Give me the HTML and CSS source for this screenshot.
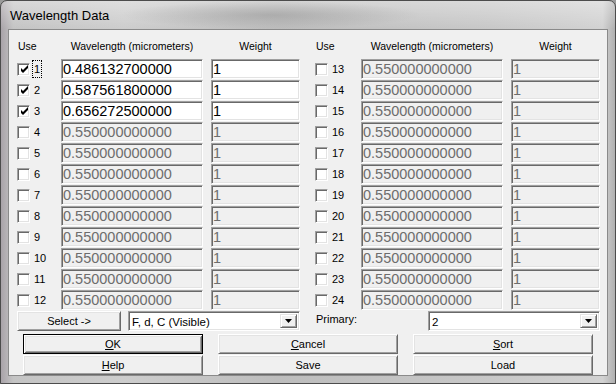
FILE: index.html
```html
<!DOCTYPE html>
<html lang="en">
<head>
  <meta charset="UTF-8">
  <title>Wavelength Data</title>
  <link rel="stylesheet" href="styles.css">
</head>
<body>
  <div class="window">
    <div class="titlebar"><span class="title">Wavelength Data</span></div>

    <div class="client">
      <div class="tables">
        <div class="group">
          <div class="head use">Use</div>
          <div class="head wl">Wavelength (micrometers)</div>
          <div class="head wt">Weight</div>

          <span class="cb on"><svg width="9" height="9" viewBox="0 0 9 9"><polygon points="1,3 3,5 8,0 8,3 3,8 1,6"/></svg></span>
          <span class="num"><span class="focus">1</span></span>
          <input class="field" type="text" value="0.486132700000">
          <input class="field weight" type="text" value="1">

          <span class="cb on"><svg width="9" height="9" viewBox="0 0 9 9"><polygon points="1,3 3,5 8,0 8,3 3,8 1,6"/></svg></span>
          <span class="num">2</span>
          <input class="field" type="text" value="0.587561800000">
          <input class="field weight" type="text" value="1">

          <span class="cb on"><svg width="9" height="9" viewBox="0 0 9 9"><polygon points="1,3 3,5 8,0 8,3 3,8 1,6"/></svg></span>
          <span class="num">3</span>
          <input class="field" type="text" value="0.656272500000">
          <input class="field weight" type="text" value="1">

          <span class="cb"></span><span class="num">4</span>
          <input class="field" type="text" value="0.550000000000" disabled>
          <input class="field weight" type="text" value="1" disabled>

          <span class="cb"></span><span class="num">5</span>
          <input class="field" type="text" value="0.550000000000" disabled>
          <input class="field weight" type="text" value="1" disabled>

          <span class="cb"></span><span class="num">6</span>
          <input class="field" type="text" value="0.550000000000" disabled>
          <input class="field weight" type="text" value="1" disabled>

          <span class="cb"></span><span class="num">7</span>
          <input class="field" type="text" value="0.550000000000" disabled>
          <input class="field weight" type="text" value="1" disabled>

          <span class="cb"></span><span class="num">8</span>
          <input class="field" type="text" value="0.550000000000" disabled>
          <input class="field weight" type="text" value="1" disabled>

          <span class="cb"></span><span class="num">9</span>
          <input class="field" type="text" value="0.550000000000" disabled>
          <input class="field weight" type="text" value="1" disabled>

          <span class="cb"></span><span class="num">10</span>
          <input class="field" type="text" value="0.550000000000" disabled>
          <input class="field weight" type="text" value="1" disabled>

          <span class="cb"></span><span class="num">11</span>
          <input class="field" type="text" value="0.550000000000" disabled>
          <input class="field weight" type="text" value="1" disabled>

          <span class="cb"></span><span class="num">12</span>
          <input class="field" type="text" value="0.550000000000" disabled>
          <input class="field weight" type="text" value="1" disabled>
        </div>

        <div class="group right">
          <div class="head use">Use</div>
          <div class="head wl">Wavelength (micrometers)</div>
          <div class="head wt">Weight</div>

          <span class="cb"></span><span class="num">13</span>
          <input class="field" type="text" value="0.550000000000" disabled>
          <input class="field weight" type="text" value="1" disabled>

          <span class="cb"></span><span class="num">14</span>
          <input class="field" type="text" value="0.550000000000" disabled>
          <input class="field weight" type="text" value="1" disabled>

          <span class="cb"></span><span class="num">15</span>
          <input class="field" type="text" value="0.550000000000" disabled>
          <input class="field weight" type="text" value="1" disabled>

          <span class="cb"></span><span class="num">16</span>
          <input class="field" type="text" value="0.550000000000" disabled>
          <input class="field weight" type="text" value="1" disabled>

          <span class="cb"></span><span class="num">17</span>
          <input class="field" type="text" value="0.550000000000" disabled>
          <input class="field weight" type="text" value="1" disabled>

          <span class="cb"></span><span class="num">18</span>
          <input class="field" type="text" value="0.550000000000" disabled>
          <input class="field weight" type="text" value="1" disabled>

          <span class="cb"></span><span class="num">19</span>
          <input class="field" type="text" value="0.550000000000" disabled>
          <input class="field weight" type="text" value="1" disabled>

          <span class="cb"></span><span class="num">20</span>
          <input class="field" type="text" value="0.550000000000" disabled>
          <input class="field weight" type="text" value="1" disabled>

          <span class="cb"></span><span class="num">21</span>
          <input class="field" type="text" value="0.550000000000" disabled>
          <input class="field weight" type="text" value="1" disabled>

          <span class="cb"></span><span class="num">22</span>
          <input class="field" type="text" value="0.550000000000" disabled>
          <input class="field weight" type="text" value="1" disabled>

          <span class="cb"></span><span class="num">23</span>
          <input class="field" type="text" value="0.550000000000" disabled>
          <input class="field weight" type="text" value="1" disabled>

          <span class="cb"></span><span class="num">24</span>
          <input class="field" type="text" value="0.550000000000" disabled>
          <input class="field weight" type="text" value="1" disabled>
        </div>
      </div>

      <div class="select-row">
        <div class="select-left">
          <button class="btn select-btn">Select -&gt;</button>
          <div class="combo">
            <span class="combo-text">F, d, C (Visible)</span>
            <span class="combo-btn"><svg width="7" height="4" viewBox="0 0 7 4"><polygon points="0,0 7,0 3.5,4"/></svg></span>
          </div>
        </div>
        <div class="select-right">
          <span class="primary-label">Primary:</span>
          <div class="combo">
            <span class="combo-text">2</span>
            <span class="combo-btn"><svg width="7" height="4" viewBox="0 0 7 4"><polygon points="0,0 7,0 3.5,4"/></svg></span>
          </div>
        </div>
      </div>

      <div class="buttons">
        <button class="btn default"><u>O</u>K</button>
        <button class="btn"><u>C</u>ancel</button>
        <button class="btn"><u>S</u>ort</button>
        <button class="btn"><u>H</u>elp</button>
        <button class="btn">Save</button>
        <button class="btn">Load</button>
      </div>
    </div>
  </div>
</body>
</html>
```

FILE: styles.css
```css
body {
  margin: 0;
  font-family: "Liberation Sans", Arial, sans-serif;
  font-size: 11px;
  color: #000;
  background: #9a9a9a;
}
.window {
  box-sizing: border-box;
  width: 616px;
  height: 384px;
  display: flex;
  flex-direction: column;
  padding: 0 7px 7px;
  border: 1px solid #4c4c4c;
  border-radius: 7px 7px 0 0;
  background:
    radial-gradient(ellipse 150px 14px at 270px 14px, rgba(120,120,120,0.35), rgba(120,120,120,0)),
    linear-gradient(to bottom, rgba(255,255,255,0.35), rgba(255,255,255,0) 28px),
    linear-gradient(to right, #a9a3a9, #c4c4c4 2%, #cdcdcd 20%, #bdbdbd 45%, #c8c8c8 80%, #d2d2d2 98%, #b0b0b0);
}
.titlebar {
  height: 28px;
  display: flex;
  align-items: center;
  padding-left: 2px;
}
.title {
  font-size: 13px;
}
.client {
  flex: 1;
  display: flex;
  flex-direction: column;
  padding: 0 7px 0 8px;
  background: #f0f0f0;
  border: 1px solid #8a8a8a;
}
.tables {
  display: flex;
  gap: 15px;
  padding-top: 5px;
}
.group {
  display: grid;
  grid-template-columns: 13px 31px 142px 97px;
  grid-template-rows: 23px;
  grid-auto-rows: 20px;
  row-gap: 1px;
  align-items: center;
}
.group.right {
  grid-template-columns: 13px 33px 142px 97px;
}
.head {
  align-self: start;
  margin-top: 3px;
  font-size: 10.5px;
  line-height: 16px;
  white-space: nowrap;
}
.head.use {
  grid-column: 1 / 3;
  padding-left: 1px;
}
.head.wl {
  text-align: center;
}
.head.wt {
  text-align: center;
  padding-left: 8px;
}
.cb {
  box-sizing: border-box;
  width: 13px;
  height: 13px;
  display: flex;
  align-items: center;
  justify-content: center;
  background: #fff;
  border: 1px solid;
  border-color: #a0a0a0 #fff #fff #a0a0a0;
  box-shadow: inset 1px 1px #696969, inset -1px -1px #e3e3e3;
}
.cb svg {
  margin: 1px 0 0 1px;
}
.num {
  padding-left: 4px;
}
.focus {
  display: inline-block;
  line-height: 16px;
  padding: 0 1px;
  margin-left: -2px;
  border: 1px dotted #000;
}
.field {
  box-sizing: border-box;
  width: 142px;
  height: 20px;
  margin: 0;
  padding: 0 0 0 1px;
  font-family: "Liberation Sans", Arial, sans-serif;
  font-size: 14.5px;
  color: #000;
  background: #fff;
  border: 1px solid;
  border-color: #a0a0a0 #fff #fff #a0a0a0;
  box-shadow: inset 1px 1px #696969, inset -1px -1px #e3e3e3;
  outline: none;
}
.field:disabled {
  color: #6d6d6d;
  background: #f0f0f0;
}
.field.weight {
  width: 89px;
  justify-self: end;
}
.select-row {
  display: flex;
  gap: 15px;
  margin-top: 1px;
  height: 20px;
}
.select-left {
  width: 283px;
  display: flex;
  justify-content: space-between;
}
.select-right {
  width: 285px;
  display: flex;
  justify-content: space-between;
}
.primary-label {
  padding-left: 1px;
  line-height: 16px;
}
.combo {
  box-sizing: border-box;
  width: 172px;
  height: 20px;
  display: flex;
  align-items: stretch;
  padding: 2px;
  background: #fff;
  border: 1px solid;
  border-color: #a0a0a0 #fff #fff #a0a0a0;
  box-shadow: inset 1px 1px #696969, inset -1px -1px #e3e3e3;
}
.combo-text {
  flex: 1;
  font-size: 11.5px;
  line-height: 16px;
  padding-left: 1px;
}
.combo-btn {
  box-sizing: border-box;
  width: 17px;
  display: flex;
  align-items: center;
  justify-content: center;
  background: #f0f0f0;
  border: 1px solid;
  border-color: #e3e3e3 #696969 #696969 #e3e3e3;
  box-shadow: inset 1px 1px #fff, inset -1px -1px #a0a0a0;
}
.btn {
  box-sizing: border-box;
  height: 20px;
  margin: 0;
  padding: 0;
  font-family: inherit;
  font-size: 11px;
  color: #000;
  background: #f0f0f0;
  border: 1px solid;
  border-color: #fff #696969 #696969 #fff;
  box-shadow: inset 1px 1px #e3e3e3, inset -1px -1px #a0a0a0;
}
.btn.default {
  border-color: #000;
  box-shadow: inset 1px 1px #fff, inset -1px -1px #696969, inset 2px 2px #e3e3e3, inset -2px -2px #a0a0a0;
}
.select-btn {
  width: 104px;
}
.buttons {
  display: grid;
  grid-template-columns: repeat(3, 180px);
  grid-auto-rows: 20px;
  gap: 1px 15px;
  margin: 3px 0 0 6px;
}
```
